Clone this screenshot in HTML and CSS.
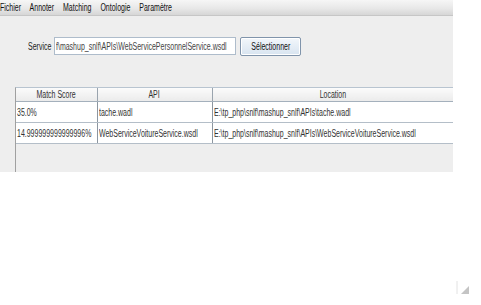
FILE: index.html
```html
<!DOCTYPE html>
<html lang="fr">
<head>
  <meta charset="UTF-8">
  <title>Mashup</title>
  <link rel="stylesheet" href="styles.css">
</head>
<body>
  <div class="window">
    <nav class="menubar">
      <span class="sq menu-items">
        <span>Fichier</span>
        <span>Annoter</span>
        <span>Matching</span>
        <span>Ontologie</span>
        <span>Paramètre</span>
      </span>
    </nav>

    <div class="service-row">
      <div class="label"><span class="sq">Service</span></div>
      <div class="field"><span class="sq">f\mashup_snlf\APIs\WebServicePersonnelService.wsdl</span></div>
      <button><span class="sq mid">Sélectionner</span></button>
    </div>

    <div class="results">
      <table>
        <colgroup>
          <col class="c-score">
          <col class="c-api">
          <col>
        </colgroup>
        <thead>
          <tr>
            <th><span class="sq mid">Match Score</span></th>
            <th><span class="sq mid">API</span></th>
            <th><span class="sq mid">Location</span></th>
          </tr>
        </thead>
        <tbody>
          <tr>
            <td><span class="sq">35.0%</span></td>
            <td><span class="sq">tache.wadl</span></td>
            <td><span class="sq">E:\tp_php\snlf\mashup_snlf\APIs\tache.wadl</span></td>
          </tr>
          <tr>
            <td><span class="sq">14.999999999999996%</span></td>
            <td><span class="sq">WebServiceVoitureService.wsdl</span></td>
            <td><span class="sq">E:\tp_php\snlf\mashup_snlf\APIs\WebServiceVoitureService.wsdl</span></td>
          </tr>
        </tbody>
      </table>
    </div>
  </div>

  <!-- resize grip -->
  <svg class="grip" width="14" height="14" viewBox="0 0 14 14">
    <path d="M1 0 L1 13" stroke="#e2e2e2" stroke-width="1"/>
    <path d="M13 5 L13 13 L5 13 Z" fill="#c4c4c4"/>
  </svg>
</body>
</html>
```

FILE: styles.css
```css
body {
  margin: 0;
  background: #ffffff;
  font-family: "Liberation Sans", Arial, sans-serif;
  font-size: 10px;
  color: #333;
  width: 481px;
  height: 305px;
  position: relative;
  overflow: hidden;
}

/* the app font is a narrow one: squeeze arial instead */
.sq {
  display: inline-block;
  white-space: nowrap;
  transform: scaleX(0.7);
  transform-origin: 0 50%;
}

.sq.mid {
  transform-origin: 50% 50%;
}

.window {
  width: 453px;
  height: 172px;
  background: #eeeeee;
  display: flex;
  flex-direction: column;
}

.menubar {
  height: 15px;
  display: flex;
  align-items: center;
  background: linear-gradient(#f6f6f6, #e8e8e8 55%, #d6d6d6);
  border-bottom: 1px solid #c6c6c6;
  color: #111;
}

.menu-items span {
  margin-right: 10px;
}

.service-row {
  display: flex;
  align-items: center;
  height: 18px;
  margin-top: 21px;
  padding-left: 28px;
}

.label {
  width: 26px;
  flex: none;
  overflow: hidden;
  color: #222;
}

.field {
  width: 179px;
  height: 16px;
  flex: none;
  background: #fff;
  border: 1px solid #aebccb;
  overflow: hidden;
  display: flex;
  align-items: center;
  padding-left: 1px;
  color: #444;
}

.service-row button {
  margin-left: 4px;
  height: 19px;
  width: 61px;
  padding: 0;
  font-family: inherit;
  font-size: 10px;
  color: #111;
  border: 1px solid #8094ab;
  border-radius: 2px;
  background: linear-gradient(#f3f7fb, #d8e4f0);
  box-shadow: inset 0 0 0 1px #ffffff;
}

.results {
  margin-top: 32px;
  margin-left: 15px;
  flex: 1;
  border-left: 1px solid #a0a0a0;
  border-top: 1px solid #b8c4d0;
  overflow: hidden;
}

table {
  border-collapse: collapse;
  width: 438px;
  table-layout: fixed;
}

.c-score { width: 81px; }
.c-api { width: 115px; }

th {
  height: 13px;
  padding: 0;
  font-weight: normal;
  text-align: center;
  background: linear-gradient(#fbfbfb, #ebebeb);
  border-right: 1px solid #9aa4ae;
  border-bottom: 1px solid #a4b0bc;
  color: #333;
  line-height: 12px;
}

td {
  height: 20px;
  padding: 0 0 0 1px;
  background: #fff;
  border-bottom: 1px solid #b4bec8;
  white-space: nowrap;
  overflow: hidden;
  color: #333;
}

td:first-child,
td:nth-child(2) {
  border-right: 1px solid #8c96a0;
}

.grip {
  position: absolute;
  left: 456px;
  top: 281px;
}
```
